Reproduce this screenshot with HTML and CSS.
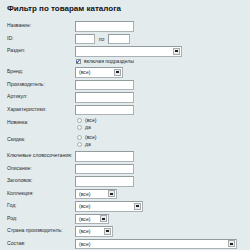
FILE: index.html
```html
<!DOCTYPE html>
<html>
<head>
  <title>Фильтр по товарам каталога</title>
  <link rel="stylesheet" href="styles.css">
</head>
<body>
  <div class="filter">
    <h1>Фильтр по товарам каталога</h1>

    <div class="row"><label>Название:</label><input class="field w59" type="text"></div>
    <div class="row">
      <label>ID:</label>
      <input class="field w20" type="text"><span class="sep">по</span><input class="field w22" type="text">
    </div>
    <div class="row"><label>Раздел:</label><div class="select w107"><span></span><i class="arrow"></i></div></div>
    <div class="row check-row"><label></label><span class="check"></span><span class="opt">включая подразделы</span></div>
    <div class="row"><label>Бренд:</label><div class="select w48"><span>(все)</span><i class="arrow"></i></div></div>
    <div class="row"><label>Производитель:</label><input class="field w59" type="text"></div>
    <div class="row"><label>Артикул:</label><input class="field w59" type="text"></div>
    <div class="row"><label>Характеристики:</label><input class="field w59" type="text"></div>

    <div class="row radios">
      <label>Новинка:</label>
      <div class="group">
        <div class="radio-line"><span class="radio"></span><span class="opt">(все)</span></div>
        <div class="radio-line"><span class="radio"></span><span class="opt">да</span></div>
      </div>
    </div>
    <div class="row radios">
      <label>Скидка:</label>
      <div class="group">
        <div class="radio-line"><span class="radio"></span><span class="opt">(все)</span></div>
        <div class="radio-line"><span class="radio"></span><span class="opt">да</span></div>
      </div>
    </div>

    <div class="row"><label>Ключевые словосочетания:</label><input class="field w59" type="text"></div>
    <div class="row"><label>Описание:</label><input class="field w59" type="text"></div>
    <div class="row"><label>Заголовок:</label><input class="field w59" type="text"></div>
    <div class="row"><label>Коллекция:</label><div class="select w42"><span>(все)</span><i class="arrow"></i></div></div>
    <div class="row"><label>Год:</label><div class="select w68"><span>(все)</span><i class="arrow"></i></div></div>
    <div class="row"><label>Род:</label><div class="select w34"><span>(все)</span><i class="arrow"></i></div></div>
    <div class="row"><label>Страна производитель:</label><div class="select w38"><span>(все)</span><i class="arrow"></i></div></div>
    <div class="row"><label>Состав:</label><div class="select w162"><span>(все)</span><i class="arrow"></i></div></div>
  </div>
</body>
</html>
```

FILE: styles.css
```css
body {
  margin: 0;
  padding: 0;
  background-color: #e4ebed;
  font-family: "Liberation Sans", Arial, sans-serif;
  color: #2a2a2a;
}
.filter {
  padding: 4px 7px;
}
h1 {
  font-size: 8px;
  font-weight: bold;
  color: #111;
  margin: 0 0 7px 0;
  line-height: 10px;
}
.row {
  display: flex;
  align-items: flex-start;
  height: 10.5px;
  margin-bottom: 2px;
}
.row label {
  width: 68px;
  flex: none;
  font-size: 5.1px;
  line-height: 7px;
  padding-top: 1px;
  white-space: nowrap;
}
.field, .select {
  box-sizing: border-box;
  height: 10.5px;
  margin: 0;
  padding: 0;
  border: 1px solid #aab2b5;
  border-top-color: #929b9e;
  border-left-color: #929b9e;
  background: #fff;
  outline: none;
}
.select {
  display: flex;
  align-items: center;
  justify-content: space-between;
  font-size: 5.1px;
  padding-left: 3px;
  padding-right: 1px;
}
.arrow {
  box-sizing: border-box;
  width: 7px;
  height: 7px;
  border: 1px solid #a4abae;
  background: #ececec;
  display: flex;
  align-items: center;
  justify-content: center;
}
.arrow::after {
  content: "";
  width: 3px;
  height: 2px;
  background: #222;
}
.sep {
  font-size: 5.1px;
  width: 13px;
  text-align: center;
  padding-top: 2px;
}
.w20 { width: 20px; }
.w22 { width: 22px; }
.w34 { width: 34px; }
.w38 { width: 38px; }
.w42 { width: 42px; }
.w48 { width: 48px; }
.w59 { width: 59px; }
.w68 { width: 68px; }
.w107 { width: 107px; }
.w162 { width: 162px; }
.check-row {
  height: 7px;
  margin-top: -0.5px;
  align-items: center;
}
.check {
  box-sizing: border-box;
  width: 5px;
  height: 5px;
  border: 1px solid #8a9296;
  background: #fff;
  margin-left: 1px;
  margin-right: 3px;
  position: relative;
}
.check::after {
  content: "";
  position: absolute;
  left: 0px;
  top: -1px;
  width: 1px;
  height: 3px;
  border: solid #3a55a0;
  border-width: 0 1px 1px 0;
  transform: rotate(40deg);
}
.opt {
  font-size: 5.1px;
  line-height: 7px;
}
.radios {
  height: auto;
  margin-bottom: 3px;
}
.radios label {
  padding-top: 2px;
}
.group {
  display: flex;
  flex-direction: column;
}
.radio-line {
  display: flex;
  align-items: center;
  height: 7px;
}
.radio {
  box-sizing: border-box;
  width: 5px;
  height: 5px;
  border: 1px solid #a6adb0;
  border-radius: 50%;
  background: #f4f6f6;
  margin-left: 2px;
  margin-right: 3px;
}
```
